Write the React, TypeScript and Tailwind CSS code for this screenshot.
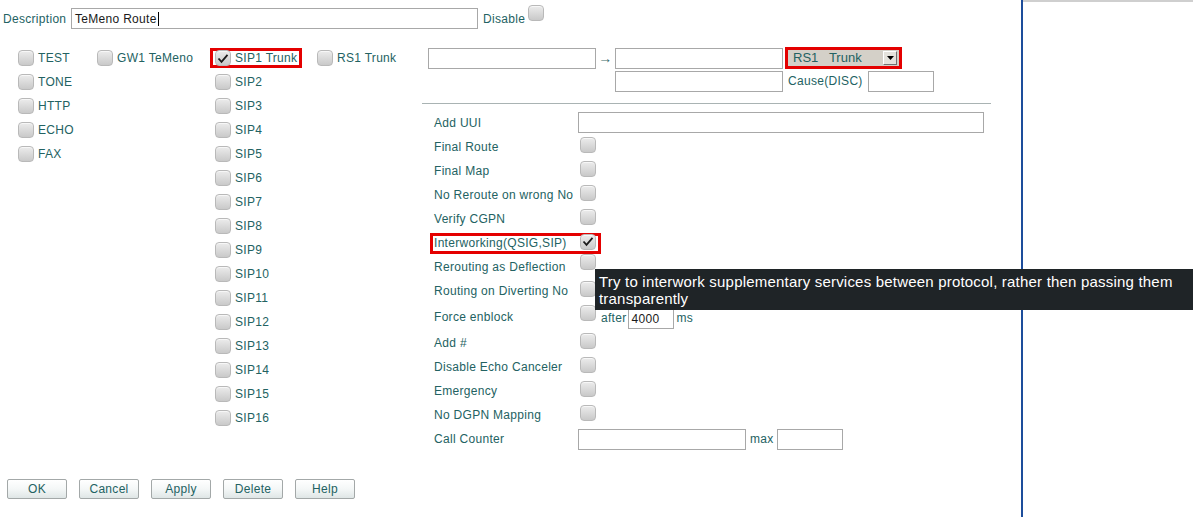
import React from 'react';

const font = { fontFamily: '"Liberation Sans", Arial, sans-serif' };

function Box({ checked = false }: { checked?: boolean }) {
  return (
    <span className="relative inline-flex h-[16px] w-[16px] shrink-0 items-center justify-center rounded-[4px] border border-[#b9b9b9] bg-gradient-to-b from-[#ececec] to-[#c9c9c9] shadow-[inset_0_1px_0_#f7f7f7]">
      {checked && (
        <svg width="12" height="11" viewBox="0 0 12 11">
          <path d="M1.5 5.5 L4.5 8.8 L10.5 1.8" fill="none" stroke="#1b1b1b" strokeWidth="1.8" />
        </svg>
      )}
    </span>
  );
}

function Item({ label, checked, hl }: { label: string; checked?: boolean; hl?: boolean }) {
  return (
    <div className="relative flex h-[24px] w-fit items-center gap-[4px] whitespace-nowrap">
      {hl && <span className="absolute -left-[5px] -right-[5px] top-[2px] bottom-[2px] border-[3px] border-[#e40000]" />}
      <Box checked={checked} />
      <span>{label}</span>
    </div>
  );
}

function Input({ w, h = 21, value }: { w: number; h?: number; value?: string }) {
  return (
    <div
      className="flex items-center border border-[#a8a8a8] bg-white pl-[3px] text-[#1a1a1a]"
      style={{ width: w, height: h }}
    >
      {value}
    </div>
  );
}

function Row({ label, h = 24, hl, children }: { label: string; h?: number; hl?: boolean; children?: React.ReactNode }) {
  return (
    <div className="relative flex items-center" style={{ height: h }}>
      {hl && <span className="absolute left-[8px] w-[171px] top-[2px] bottom-[1px] border-[3px] border-[#e40000]" />}
      <div className="w-[156px] shrink-0 pl-[12px] whitespace-nowrap">{label}</div>
      <div className="flex items-center">{children}</div>
    </div>
  );
}

const sips = Array.from({ length: 15 }, (_, i) => `SIP${i + 2}`);

export default function App() {
  return (
    <div className="relative flex h-[517px] w-[1193px] overflow-hidden bg-white text-[12px] tracking-[0.3px] text-[#236262]" style={font}>
      <div className="flex w-[1023px] shrink-0 flex-col border-r-[2px] border-[#1d4d9b]">
        {/* description */}
        <div className="mt-[8px] flex h-[21px] items-center pl-[3px]">
          <span className="w-[68px]">Description</span>
          <div className="flex h-[21px] w-[407px] items-center border border-[#a8a8a8] pl-[3px] text-[#1a1a1a]">
            TeMeno Route<span className="ml-[1px] h-[14px] w-px bg-black" />
          </div>
          <span className="ml-[5px]">Disable</span>
          <span className="ml-[3px] -mt-[6px]">
            <Box />
          </span>
        </div>

        <div className="mt-[17px] flex">
          {/* checkbox columns */}
          <div className="flex w-[422px] shrink-0 pl-[18px]">
            <div className="w-[79px]">
              {['TEST', 'TONE', 'HTTP', 'ECHO', 'FAX'].map((t) => (
                <Item key={t} label={t} />
              ))}
            </div>
            <div className="w-[118px]">
              <Item label="GW1 TeMeno" />
            </div>
            <div className="w-[102px]">
              <Item label="SIP1 Trunk" checked hl />
              {sips.map((s) => (
                <Item key={s} label={s} />
              ))}
            </div>
            <div>
              <Item label="RS1 Trunk" />
            </div>
          </div>

          {/* form */}
          <div className="w-[569px]">
            <div className="flex h-[24px] items-center pl-[6px]">
              <Input w={168} />
              <span className="flex w-[19px] justify-center text-[14px] text-[#3d6b6b]">→</span>
              <Input w={168} />
              <div className="ml-[2px] flex h-[22px] w-[117px] items-center border-[3px] border-[#e40000] bg-[#d4d0c8] pl-[5px] pr-[2px] tracking-normal">
                <span className="flex-1 whitespace-pre text-[13px]">RS1   Trunk</span>
                <span className="flex h-[14px] w-[14px] items-center justify-center border border-t-white border-l-white border-r-[#707070] border-b-[#707070] bg-[#e4e2dc]">
                  <svg width="7" height="4" viewBox="0 0 7 4">
                    <path d="M0 0 H7 L3.5 4 Z" fill="#000" />
                  </svg>
                </span>
              </div>
            </div>
            <div className="flex h-[22px] items-center pl-[193px]">
              <Input w={168} />
              <span className="ml-[5px]">Cause(DISC)</span>
              <span className="ml-[5px]">
                <Input w={66} />
              </span>
            </div>
            <div className="mt-[11px] h-px bg-[#a9b3b3]" />
            <div className="mt-[6px]">
              <Row label="Add UUI" h={25}>
                <Input w={406} />
              </Row>
              <Row label="Final Route">
                <span className="ml-[2px]"><Box /></span>
              </Row>
              <Row label="Final Map">
                <span className="ml-[2px]"><Box /></span>
              </Row>
              <Row label="No Reroute on wrong No">
                <span className="ml-[2px]"><Box /></span>
              </Row>
              <Row label="Verify CGPN">
                <span className="ml-[2px]"><Box /></span>
              </Row>
              <Row label="Interworking(QSIG,SIP)" hl>
                <span className="ml-[2px]"><Box checked /></span>
              </Row>
              <Row label="Rerouting as Deflection">
                <span className="ml-[2px] -mt-[6px]"><Box /></span>
              </Row>
              <Row label="Routing on Diverting No">
                <span className="ml-[2px]"><Box /></span>
              </Row>
              <Row label="Force enblock" h={28}>
                <span className="ml-[2px] -mt-[4px]"><Box /></span>
                <span className="ml-[5px] mt-[2px]">after</span>
                <span className="ml-[1px] mt-[3px]">
                  <Input w={46} h={21} value="4000" />
                </span>
                <span className="ml-[3px] mt-[2px]">ms</span>
              </Row>
              <Row label="Add #">
                <span className="ml-[2px]"><Box /></span>
              </Row>
              <Row label="Disable Echo Canceler">
                <span className="ml-[2px]"><Box /></span>
              </Row>
              <Row label="Emergency">
                <span className="ml-[2px]"><Box /></span>
              </Row>
              <Row label="No DGPN Mapping">
                <span className="ml-[2px]"><Box /></span>
              </Row>
              <Row label="Call Counter">
                <Input w={168} />
                <span className="ml-[4px]">max</span>
                <span className="ml-[3px]">
                  <Input w={66} />
                </span>
              </Row>
            </div>
          </div>
        </div>

        {/* buttons */}
        <div className="mt-[28px] flex gap-[12px] pl-[7px]">
          {['OK', 'Cancel', 'Apply', 'Delete', 'Help'].map((b) => (
            <button
              key={b}
              className="h-[20px] w-[60px] rounded-[2px] border border-[#a3a8a8] bg-gradient-to-b from-white via-[#f4f7f7] to-[#dfe6e6] text-[12px] text-[#236262]"
            >
              {b}
            </button>
          ))}
        </div>
      </div>

      {/* right panel */}
      <div className="flex-1 border-t-[2px] border-[#cfcfcf] bg-white" />

      {/* tooltip */}
      <div className="absolute left-[595px] top-[269px] w-[600px] bg-[#1f2427] px-[4px] pt-[4px] pb-[3px] text-[15px] leading-[17px] tracking-[0.2px] text-white">
        Try to interwork supplementary services between protocol, rather then passing them transparently
      </div>
    </div>
  );
}
